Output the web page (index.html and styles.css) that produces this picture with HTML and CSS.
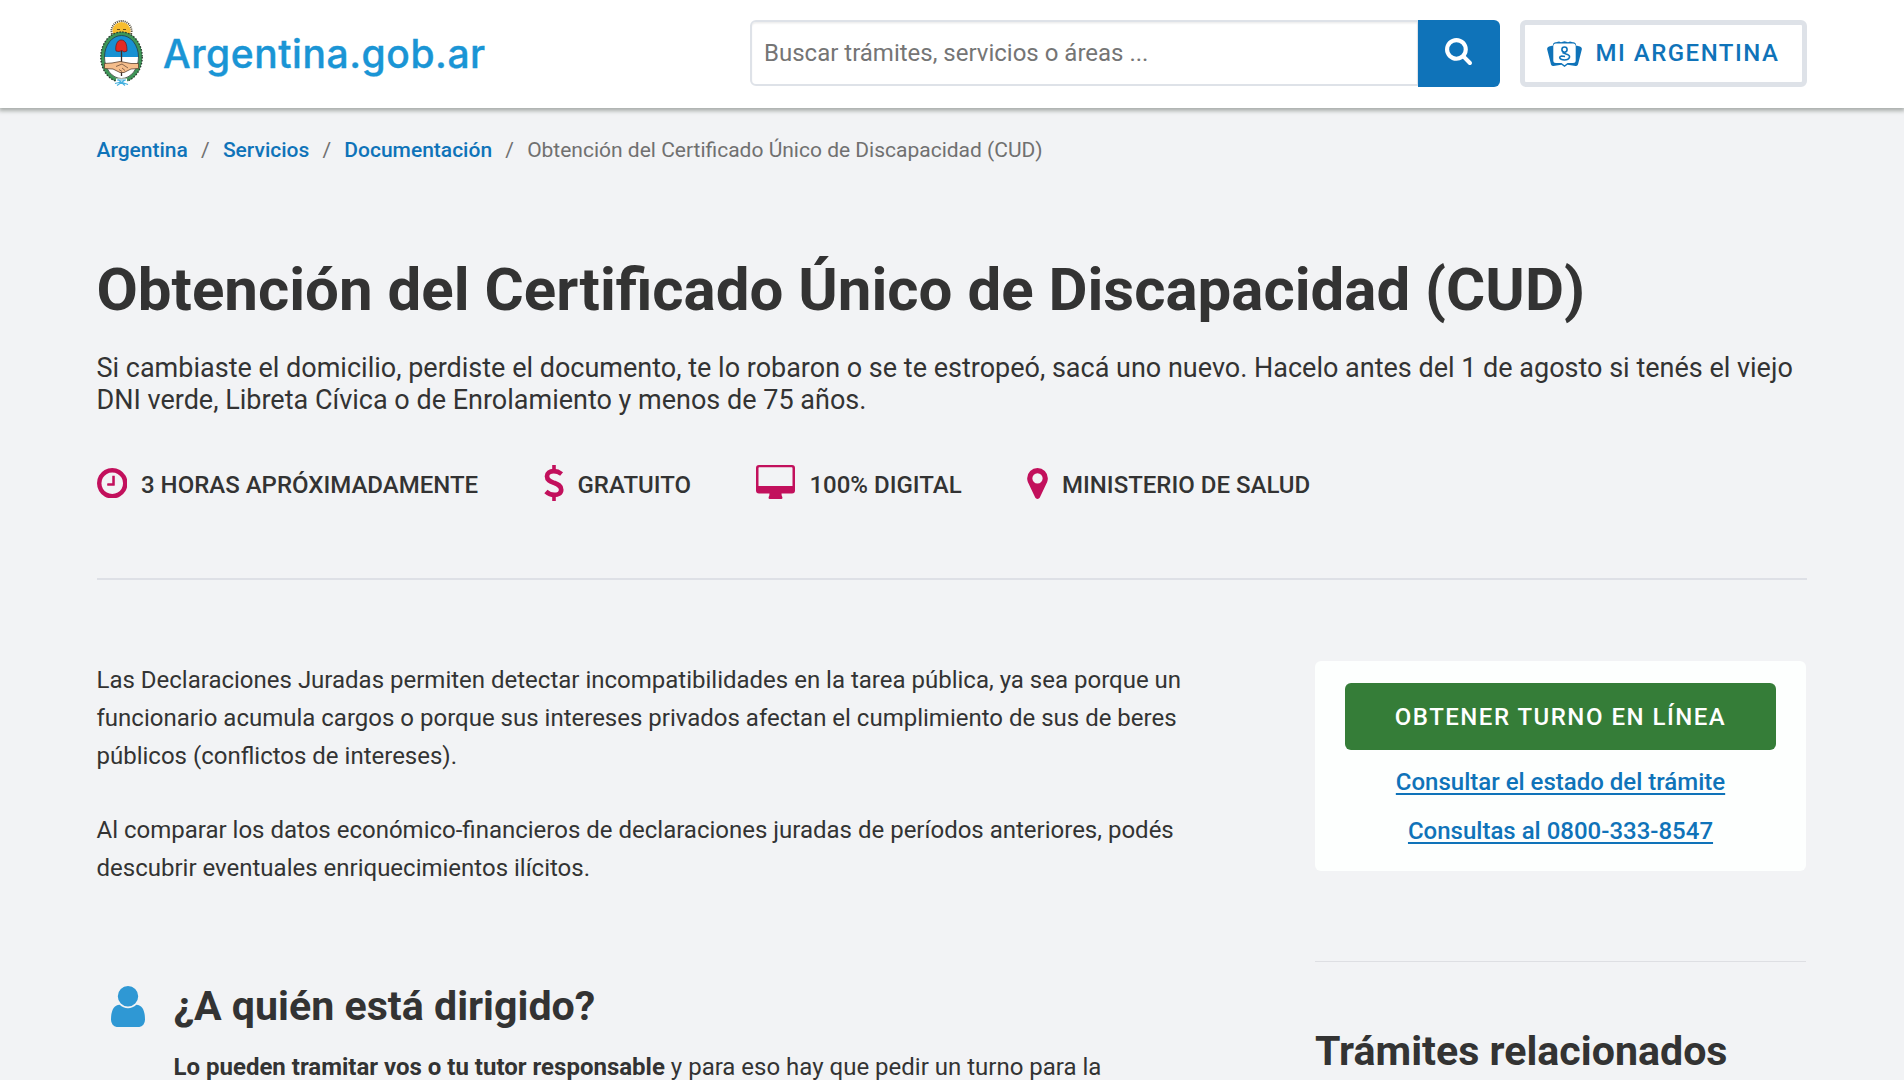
FILE: index.html
```html
<!DOCTYPE html>
<html lang="es">
<head>
<meta charset="utf-8">
<title>Obtención del Certificado Único de Discapacidad (CUD)</title>
<link rel="stylesheet" href="styles.css">
</head>
<body>
<header class="navbar">
  <div class="container navbar-row">
    <a class="brand" href="#">
      <svg class="brand-emblem" viewBox="0 0 43 66" aria-hidden="true">
        <circle cx="21.500" cy="11" r="10" fill="none" stroke="#4a4028" stroke-width="2" stroke-dasharray="1 1"/>
        <circle cx="21.500" cy="11" r="9" fill="#f7bd2f"/>
        <path d="M17 9.500h3M23 9.500h3M19 12.500q2.500 1.500 5 0" fill="none" stroke="#6b4d16" stroke-width="1.200"/>
        <ellipse cx="21.500" cy="37" rx="19" ry="23.500" fill="#fff"/>
        <path d="M3 37C3 22 11 13.500 21.500 13.500S40 22 40 37z" fill="#1791d2"/>
        <ellipse cx="21.500" cy="37" rx="19" ry="23.500" fill="none" stroke="#3d9657" stroke-width="3.600"/>
        <ellipse cx="21.500" cy="37" rx="20.700" ry="25" fill="none" stroke="#2d3b32" stroke-width="1.400" stroke-dasharray="1.500 1.500"/>
        <ellipse cx="21.500" cy="37" rx="17" ry="21.500" fill="none" stroke="#2d3b32" stroke-width=".8"/>
        <path d="M21.500 30v26" stroke="#3a2b26" stroke-width="1.300"/>
        <path d="M16 31c-1-5 1-11 5-11 5 0 6 5 6 11l-3 1-2-1.500-3 1z" fill="#e32b22" stroke="#6d1713" stroke-width=".7"/>
        <path d="M4.500 43.500 12 43l8-1.500 3 .5 8 1.500 7.500 0v5L31 49l-7 3.500h-4L13 49l-8.500-.5z" fill="#f5bd8b" stroke="#5c4130" stroke-width=".8"/>
        <path d="M16 46.500 22 44l6 4M19 49.500l3 2M22 48l3 2.500" fill="none" stroke="#5c4130" stroke-width=".7"/>
        <path d="M16 58.500h11v7.500h-11z" fill="#fff"/>
        <path d="M17 60h9M15 63.500l6-1.500 7 2.500M17 65.500l8-5.500M18 59.500l7 6" stroke="#43b0df" stroke-width="1.100" fill="none"/>
      </svg>
      <span class="brand-name">Argentina.gob.ar</span>
    </a>
    <form class="search">
      <input class="search-input" type="text" placeholder="Buscar trámites, servicios o áreas ...">
      <button class="search-button" type="button" aria-label="Buscar">
        <svg class="search-icon" viewBox="64 128 1664 1664"><path fill="currentColor" d="M1216 832q0-185-131.500-316.500T768 384 451.500 515.500 320 832t131.500 316.500T768 1280t316.500-131.500T1216 832zm512 832q0 52-38 90t-90 38q-54 0-90-38l-343-342q-179 124-399 124-143 0-273.500-55.500t-225-150-150-225T64 832t55.500-273.500 150-225 225-150T768 128t273.500 55.500 225 150 150 225T1472 832q0 220-124 399l343 343q37 37 37 90z"/></svg>
      </button>
    </form>
    <a class="account" href="#">
      <svg class="account-icon" viewBox="0 0 35 26" aria-hidden="true">
        <path fill="currentColor" d="M6 3Q7 1 9 1.300L12 .5l2 .8L17.500.3 21 1.300l2-.8 3 .8q2-.3 3 1.700v1.500l4 1q2.300.8 1.800 3L31 23.500q-.8 1.700-2.500 1.500l-8-1.200-3 2.200-3-2.200-8 1.200Q4.800 25.200 4 23.500L.2 8.500Q-.3 6.300 2 5.500l4-1z"/>
        <path fill="#fff" d="M9 2.600h17q2.700 0 2.700 2.700v14.200q0 2.500-2.700 2.500h-5.500l-3 2.200-3-2.200H9q-2.700 0-2.700-2.500V5.300Q6.300 2.600 9 2.600z"/>
        <circle cx="17.500" cy="8.600" r="2.600" fill="none" stroke="currentColor" stroke-width="1.600"/>
        <path d="M15.500 11.500l3.500 1.500q4 1 3.500 3.200Q21.500 19 17.500 19T12.700 16.800q0-1.500 2-1.800l3.300.5" fill="none" stroke="currentColor" stroke-width="1.600"/>
      </svg>
      <span>MI ARGENTINA</span>
    </a>
  </div>
</header>

<main class="container">
  <nav class="breadcrumb">
    <a href="#">Argentina</a><span class="sep">/</span><a href="#">Servicios</a><span class="sep">/</span><a href="#">Documentación</a><span class="sep">/</span><span>Obtención del Certificado Único de Discapacidad (CUD)</span>
  </nav>

  <h1 class="title">Obtención del Certificado Único de Discapacidad (CUD)</h1>
  <p class="lead">Si cambiaste el domicilio, perdiste el documento, te lo robaron o se te estropeó, sacá uno nuevo. Hacelo antes del 1 de agosto si tenés el viejo DNI verde, Libreta Cívica o de Enrolamiento y menos de 75 años.</p>

  <ul class="facts">
    <li class="fact">
      <svg class="icon-clock" viewBox="128 128 1536 1536"><path fill="currentColor" d="M1024 544v448q0 14-9 23t-23 9H672q-14 0-23-9t-9-23v-64q0-14 9-23t23-9h224V544q0-14 9-23t23-9h64q14 0 23 9t9 23zm416 352q0-148-73-273t-198-198-273-73-273 73-198 198-73 273 73 273 198 198 273 73 273-73 198-198 73-273zm224 0q0 209-103 385.500T1281.500 1561 896 1664t-385.500-103T231 1281.500 128 896t103-385.500T510.500 231 896 128t385.500 103T1561 510.500 1664 896z"/></svg>
      <span>3 HORAS APRÓXIMADAMENTE</span>
    </li>
    <li class="fact">
      <svg class="icon-money" viewBox="0 0 20 36"><path d="M10 0v6M10 30v6" stroke="currentColor" stroke-width="3.600"/><path d="M17.600 9C14.500 6.600 12 6.100 9.800 6.100 5.500 6.100 3 8.200 3 11.200c0 4.300 3.600 5.300 7.200 6.700 3.700 1.500 7 2.700 7 6.800 0 3.400-3 5.200-7 5.200-3 0-5.800-1.200-8.300-3.500" fill="none" stroke="currentColor" stroke-width="4.700"/></svg>
      <span>GRATUITO</span>
    </li>
    <li class="fact">
      <svg class="icon-screen" viewBox="0 0 39 34"><path fill="currentColor" fill-rule="evenodd" d="M3 0h33q3 0 3 3v22.500q0 3-3 3H25.500q0 2 .8 3.500.5 2-1 2H13.700q-1.500 0-1-2 .8-1.500.8-3.500H3q-3 0-3-3V3q0-3 3-3zm.3 2.200q-.8 0-.8 1V21h34V3.200q0-1-.8-1z"/></svg>
      <span>100% DIGITAL</span>
    </li>
    <li class="fact">
      <svg class="icon-pin" viewBox="384 128 1024 1536"><path fill="currentColor" d="M1152 640q0-106-75-181t-181-75-181 75-75 181 75 181 181 75 181-75 75-181zm256 0q0 109-33 179l-364 774q-16 33-47.500 52t-67.500 19-67.500-19-46.500-52L417 819q-33-70-33-179 0-212 150-362t362-150 362 150 150 362z"/></svg>
      <span>MINISTERIO DE SALUD</span>
    </li>
  </ul>

  <div class="columns">
    <article class="content">
      <p>Las Declaraciones Juradas permiten detectar incompatibilidades en la tarea pública, ya sea porque un funcionario acumula cargos o porque sus intereses privados afectan el cumplimiento de sus de beres públicos (conflictos de intereses).</p>
      <p>Al comparar los datos económico-financieros de declaraciones juradas de períodos anteriores, podés descubrir eventuales enriquecimientos ilícitos.</p>
      <section class="topic">
        <svg class="topic-icon" viewBox="256 128 1280 1536"><path fill="currentColor" d="M1536 1399q0 109-62.500 187t-150.500 78H469q-88 0-150.500-78T256 1399q0-85 8.500-160.500t31.500-152 58.500-131 94-89T583 832q131 128 313 128t313-128q76 0 134.500 34.500t94 89 58.500 131 31.500 152 8.500 160.500zm-256-887q0 159-112.500 271.500T896 896 624.500 783.500 512 512t112.500-271.500T896 128t271.500 112.500T1280 512z"/></svg>
        <div class="topic-body">
          <h2>¿A quién está dirigido?</h2>
          <p><strong>Lo pueden tramitar vos o tu tutor responsable</strong> y para eso hay que pedir un turno para la</p>
        </div>
      </section>
    </article>
    <aside class="sidebar">
      <div class="card">
        <a class="primary" href="#">OBTENER TURNO EN LÍNEA</a>
        <a class="link" href="#">Consultar el estado del trámite</a>
        <a class="link" href="#">Consultas al 0800-333-8547</a>
      </div>
      <h2 class="related">Trámites relacionados</h2>
    </aside>
  </div>
</main>
</body>
</html>
```
FILE: styles.css
```css
* { box-sizing: border-box; }
html, body { height: 100%; }
body {
  margin: 0;
  overflow: hidden;
  background: #f2f3f5;
  color: #333;
  font: 24px/38px Roboto, "Liberation Sans", sans-serif;
}
a { color: #0f73b9; text-decoration: none; }
h1, h2, p, ul { margin: 0; padding: 0; }
svg { display: block; flex: none; }
.container { width: 1710px; margin: 0 97px 0 96.5px; }

.navbar {
  height: 108px;
  background: #fff;
  box-shadow: 0 2px 4px 1px rgba(60, 70, 60, .4);
}
.navbar-row { display: flex; align-items: flex-start; padding-top: 20px; }
.brand { display: flex; flex: none; width: 653.5px; padding-left: 3.5px; }
.brand-emblem { width: 43px; height: 66px; }
.brand-name {
  margin-left: 20px;
  color: #1a95d5;
  font: 500 39px/67px Inter, sans-serif;
  letter-spacing: .55px;
  -webkit-text-stroke: .4px #1a95d5;
}
.search { display: flex; flex: none; width: 750px; }
.search-input {
  width: 668px;
  height: 66px;
  padding: 0 12px;
  border: 2px solid #dee2e8;
  border-right-width: 1px;
  border-radius: 6px 0 0 6px;
  box-shadow: inset 0 1.5px 1.5px rgba(0, 0, 0, .075);
  font: 24px Roboto, sans-serif;
}
.search-input::placeholder { color: #757575; }
.search-button {
  display: flex;
  width: 82px;
  height: 67px;
  padding: 18px 0 0 27px;
  border: 0;
  border-radius: 0 6px 6px 0;
  background: #0f73b9;
  color: #fff;
}
.search-icon { width: 27px; height: 27px; }
.account {
  display: flex;
  flex: none;
  align-items: center;
  width: 287px;
  height: 67px;
  margin-left: 20px;
  padding-left: 22px;
  border: 5px solid #dee2e8;
  border-radius: 6px;
  font-weight: 500;
  line-height: 37px;
  letter-spacing: 1.5px;
  white-space: nowrap;
}
.account-icon { width: 35px; height: 26px; margin-right: 13.5px; }
.account span { padding-bottom: 1px; }

.breadcrumb { padding-top: 27px; color: #707070; font-size: 21px; line-height: 30px; }
.breadcrumb a { font-weight: 500; }
.sep { padding: 0 13.2px; }
.title { margin-top: 91px; font-size: 60px; font-weight: 700; line-height: 67px; white-space: nowrap; }
.lead { margin-top: 29px; font-size: 27px; line-height: 32.4px; }

.facts {
  display: flex;
  height: 115px;
  margin-top: 48px;
  border-bottom: 2px solid #dee0e6;
  list-style: none;
  font-weight: 500;
  line-height: 41px;
}
.fact { display: flex; gap: 14px; margin-right: 65.4px; }
.icon-clock, .icon-money, .icon-screen, .icon-pin { color: #c2105c; }
.icon-clock { width: 30.5px; height: 30.5px; margin-top: 3px; }
.icon-money { width: 20px; height: 36px; }
.icon-screen { width: 39px; height: 34px; }
.icon-pin { width: 21px; height: 31px; margin-top: 3px; }

.columns { display: flex; justify-content: space-between; padding: 81px .5px 0 0; }
.content { width: 1100px; }
.content > p { margin-bottom: 36px; }
.topic { display: flex; gap: 29px; padding: 60px 0 0 14px; }
.topic-icon { width: 34px; height: 41px; margin-top: 3px; color: #2f98d4; }
h2 { font-size: 41.15px; font-weight: 700; line-height: 46px; }
.topic-body p { margin-top: 19px; white-space: nowrap; }
strong { font-weight: 700; }

.sidebar { width: 491px; }
.card {
  display: flex;
  flex-direction: column;
  align-items: center;
  height: 210px;
  padding: 22px 30px 0;
  border-radius: 6px;
  background: #fdfffe;
  font-weight: 500;
}
.primary {
  width: 100%;
  height: 67px;
  margin-bottom: 8px;
  border-radius: 6px;
  background: #357d38;
  color: #fff;
  letter-spacing: 1.5px;
  line-height: 69px;
  text-align: center;
}
.link { line-height: 49px; text-decoration: underline; text-decoration-thickness: 2px; text-underline-offset: 3px; }
.related { margin-top: 90px; padding-top: 66px; border-top: 1px solid #dedfe3; }
```
